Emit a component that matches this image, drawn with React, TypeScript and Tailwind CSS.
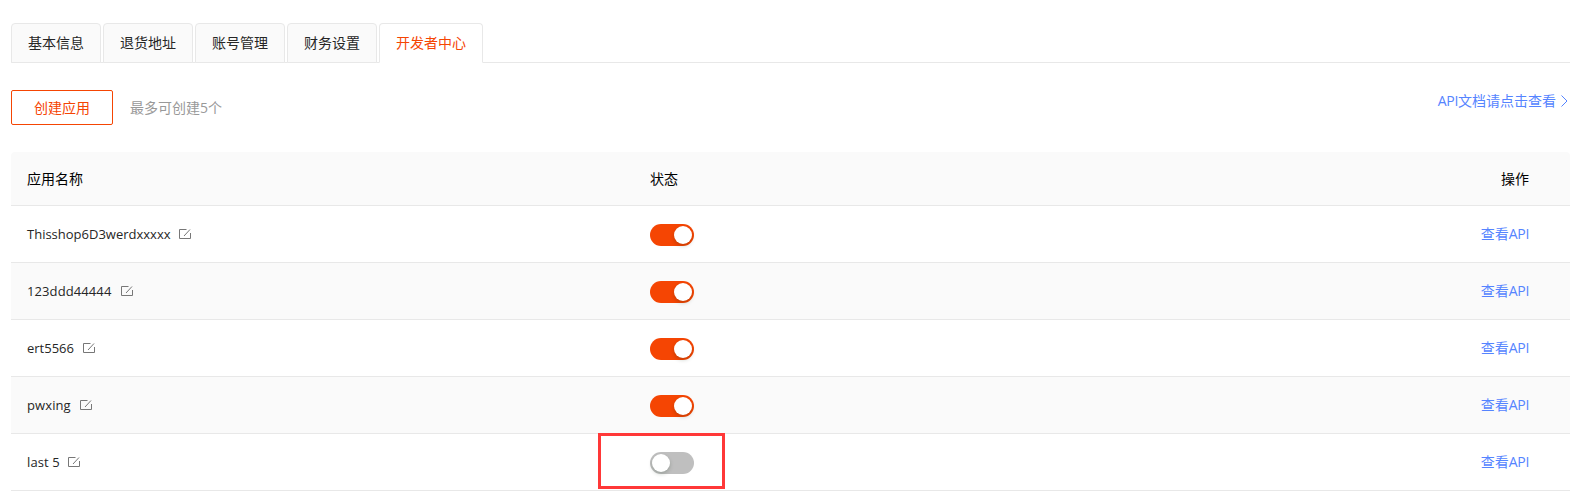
import { useState } from 'react';

interface AppItem {
  id: number;
  name: string;
  enabled: boolean;
  nameClass: string;
}

const TABS = ['基本信息', '退货地址', '账号管理', '财务设置', '开发者中心'];

const APPS: AppItem[] = [
  { id: 1, name: 'Thisshop6D3werdxxxxx', enabled: true, nameClass: 'w-[152px]' },
  { id: 2, name: '123ddd44444', enabled: true, nameClass: 'w-[94px] tracking-[0.1px]' },
  { id: 3, name: 'ert5566', enabled: true, nameClass: 'w-[56px]' },
  { id: 4, name: 'pwxing', enabled: true, nameClass: 'w-[53px] tracking-[0.1px]' },
  { id: 5, name: 'last 5', enabled: false, nameClass: 'w-[41px] tracking-[0.1px]' },
];

function EditIcon() {
  return (
    <svg className="h-3 w-3 text-[#777]" viewBox="0 0 12 12" fill="none" stroke="currentColor" strokeWidth="1">
      <path d="M7.5 1.5H.5v9h11V5" />
      <path d="M5 8L11 1.5" />
    </svg>
  );
}

function Toggle({ checked, onChange }: { checked: boolean; onChange: () => void }) {
  return (
    <button
      role="switch"
      aria-checked={checked}
      onClick={onChange}
      className={`mt-0.5 flex h-[22px] w-11 items-center rounded-full p-0.5 ${
        checked ? 'justify-end bg-[#f54503]' : 'justify-start bg-[#bfbfbf]'
      }`}
    >
      <span className="h-[18px] w-[18px] rounded-full bg-white shadow-[0_2px_4px_rgba(0,35,11,0.2)]" />
    </button>
  );
}

export default function App() {
  const [activeTab, setActiveTab] = useState(4);
  const [apps, setApps] = useState(APPS);

  function toggleApp(id: number) {
    setApps(apps.map((a) => (a.id === id ? { ...a, enabled: !a.enabled } : a)));
  }

  return (
    <div className="h-[503px] overflow-hidden bg-white pt-[23px] pr-[26px] pl-[11px] font-['Open_Sans','Noto_Sans_CJK_SC',sans-serif] text-sm text-[#262626]">
      <div className="flex h-10 gap-0.5 border-b border-[#e8e8e8]">
        {TABS.map((tab, i) => (
          <button
            key={tab}
            onClick={() => setActiveTab(i)}
            className={`h-10 rounded-t border px-4 leading-[38px] whitespace-nowrap ${
              i === activeTab
                ? 'border-[#e8e8e8] border-b-white bg-white text-[#f54503]'
                : 'border-[#e8e8e8] bg-[#fafafa]'
            }`}
          >
            {tab}
          </button>
        ))}
      </div>

      <div className="mt-[27px] flex h-[35px] items-center">
        <button className="h-[35px] w-[102px] rounded-xs border border-[#f54503] text-[#f54503]">创建应用</button>
        <span className="ml-[17px] text-[#999]">最多可创建5个</span>
        <a className="mr-0.5 -mt-[13px] ml-auto flex items-center text-[#5584ff]">
          <span className="whitespace-nowrap">
            <span className="tracking-[-0.3px]">API</span>文档请点击查看
          </span>
          <svg className="ml-1 h-3 w-2" viewBox="0 0 8 12" fill="none" stroke="currentColor" strokeWidth="1">
            <path d="M1.5 .5L7 6L1.5 11.5" />
          </svg>
        </a>
      </div>

      <div className="mt-[27px]">
        <div className="grid h-[54px] grid-cols-[623px_1fr_200px] items-center rounded-t border-b border-[#e8e8e8] bg-[#fafafa] px-4 text-black">
          <span>应用名称</span>
          <span>状态</span>
          <span className="pr-[25px] text-right">操作</span>
        </div>
        {apps.map((app) => (
          <div
            key={app.id}
            className="relative grid h-[57px] grid-cols-[623px_1fr_200px] items-center border-b border-[#e8e8e8] px-4 even:bg-white odd:bg-[#fafafa]"
          >
            <div className="flex items-center">
              <span className={`text-[13px] leading-5 whitespace-nowrap ${app.nameClass}`}>{app.name}</span>
              <EditIcon />
            </div>
            <Toggle checked={app.enabled} onChange={() => toggleApp(app.id)} />
            <a className="pr-[25px] text-right text-[#5584ff]">
              查看<span className="tracking-[-0.3px]">API</span>
            </a>
            {app.id === 5 && (
              <div className="pointer-events-none absolute -top-px left-[587px] h-14 w-[127px] border-3 border-[#ff3838]" />
            )}
          </div>
        ))}
      </div>
    </div>
  );
}
